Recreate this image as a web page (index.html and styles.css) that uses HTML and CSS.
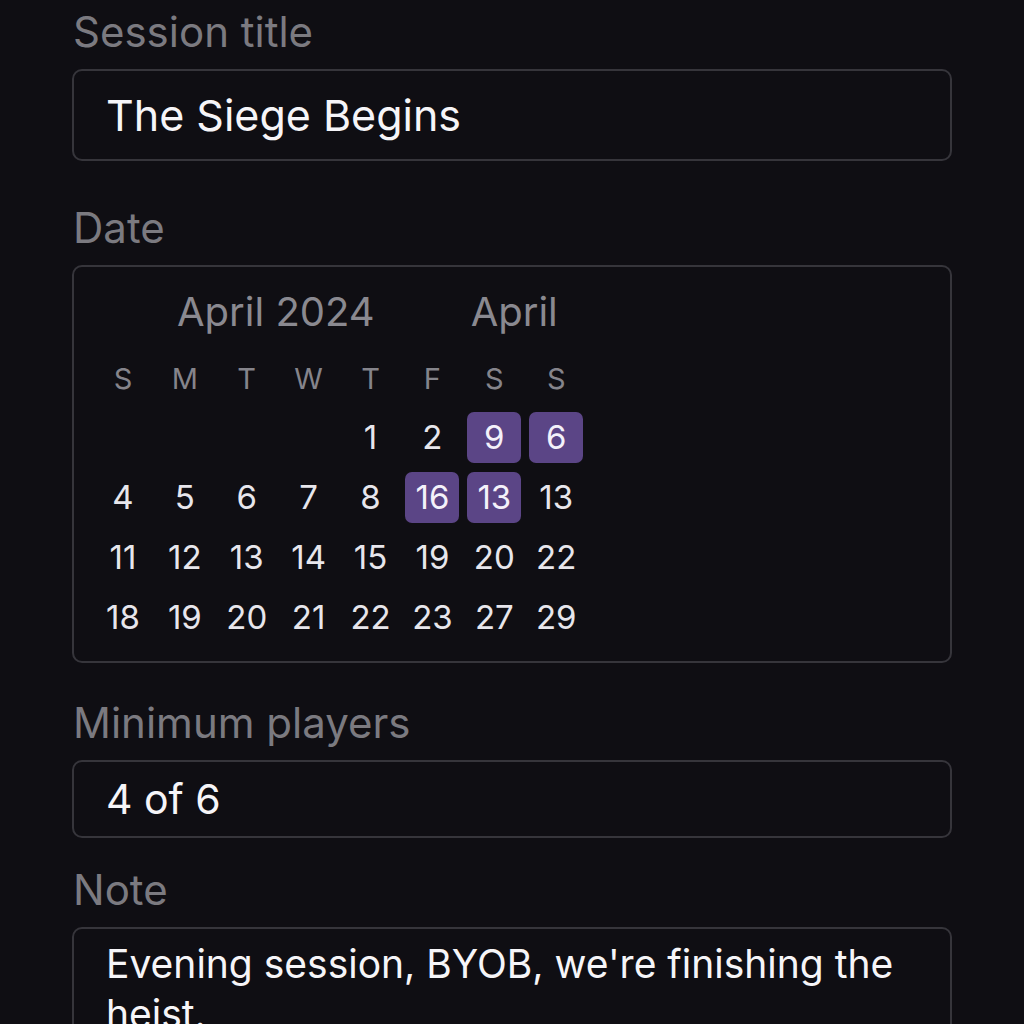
FILE: index.html
```html
<html lang="en">
<head>
    <meta charset="UTF-8">
    <meta name="viewport" content="width=device-width, initial-scale=1.0">
    <link rel="stylesheet" href="styles.css">
    <title>New session</title>
</head>
<body>

    <main class="form">
        <div class="field field-title">
            <div class="label">Session title</div>
            <div class="input input-title">The Siege Begins</div>
        </div>

        <div class="field field-date">
            <div class="label">Date</div>
            <div class="calendar">
                <div class="cal-head">
                    <span class="month-year">April 2024</span>
                    <span class="month">April</span>
                </div>
                <div class="cal-grid">
                    <span class="wd">S</span><span class="wd">M</span><span class="wd">T</span><span class="wd">W</span>
                    <span class="wd">T</span><span class="wd">F</span><span class="wd">S</span><span class="wd">S</span>

                    <span></span><span></span><span></span><span></span>
                    <span class="day">1</span><span class="day">2</span>
                    <span class="day picked">9</span><span class="day picked">6</span>

                    <span class="day">4</span><span class="day">5</span><span class="day">6</span><span class="day">7</span>
                    <span class="day">8</span><span class="day picked">16</span><span class="day picked">13</span><span class="day">13</span>

                    <span class="day">11</span><span class="day">12</span><span class="day">13</span><span class="day">14</span>
                    <span class="day">15</span><span class="day">19</span><span class="day">20</span><span class="day">22</span>

                    <span class="day">18</span><span class="day">19</span><span class="day">20</span><span class="day">21</span>
                    <span class="day">22</span><span class="day">23</span><span class="day">27</span><span class="day">29</span>
                </div>
            </div>
        </div>

        <div class="field field-players">
            <div class="label">Minimum players</div>
            <div class="input input-players">4 of 6</div>
        </div>

        <div class="field field-note">
            <div class="label">Note</div>
            <div class="input input-note">Evening session, BYOB, we're finishing the heist.</div>
        </div>
    </main>

</body>
</html>
```

FILE: styles.css
```css
body {
    background-color: #0f0e13;
    margin: 0;
    font-family: Inter, "Noto Sans", sans-serif;
    color: #f2f1f5;
    height: 1024px;
    overflow: hidden;
}

.form {
    width: 880px;
    margin-left: 72px;
    padding-top: 8px;
}

.label {
    font-size: 42px;
    line-height: 48px;
    color: #7b7a80;
    padding-left: 1px;
    margin-bottom: 13px;
}

.input {
    border: 2px solid #36353b;
    border-radius: 10px;
    box-sizing: border-box;
    padding-left: 32px;
    color: #f6f5f8;
}

.input-title {
    height: 92px;
    line-height: 88px;
    font-size: 43px;
}

.field-date {
    margin-top: 43px;
}

.calendar {
    height: 398px;
    border: 2px solid #36353b;
    border-radius: 10px;
    box-sizing: border-box;
    padding: 21px 0 0 18px;
}

.cal-head {
    display: flex;
    font-size: 40px;
    line-height: 48px;
    color: #8a8990;
    padding-left: 85px;
}

.month {
    margin-left: 96px;
}

.cal-grid {
    display: grid;
    grid-template-columns: repeat(8, 61.9px);
    grid-template-rows: 49px repeat(4, 60px);
    margin-top: 22px;
    width: 496px;
}

.cal-grid span {
    display: flex;
    align-items: center;
    justify-content: center;
}

.wd {
    font-size: 29px;
    color: #85848b;
    height: 40px;
    align-self: start;
}

.day {
    font-size: 33px;
    color: #e7e6ec;
}

.picked {
    background-color: #5b4586;
    border-radius: 7px;
    margin: 4.5px 4px;
    color: #f4f1fa;
}

.field-players {
    margin-top: 36px;
}

.input-players {
    height: 78px;
    line-height: 74px;
    font-size: 41px;
}

.field-note {
    margin-top: 28px;
}

.input-note {
    height: 140px;
    line-height: 50px;
    font-size: 39px;
    padding-top: 10px;
    padding-right: 30px;
}
```
